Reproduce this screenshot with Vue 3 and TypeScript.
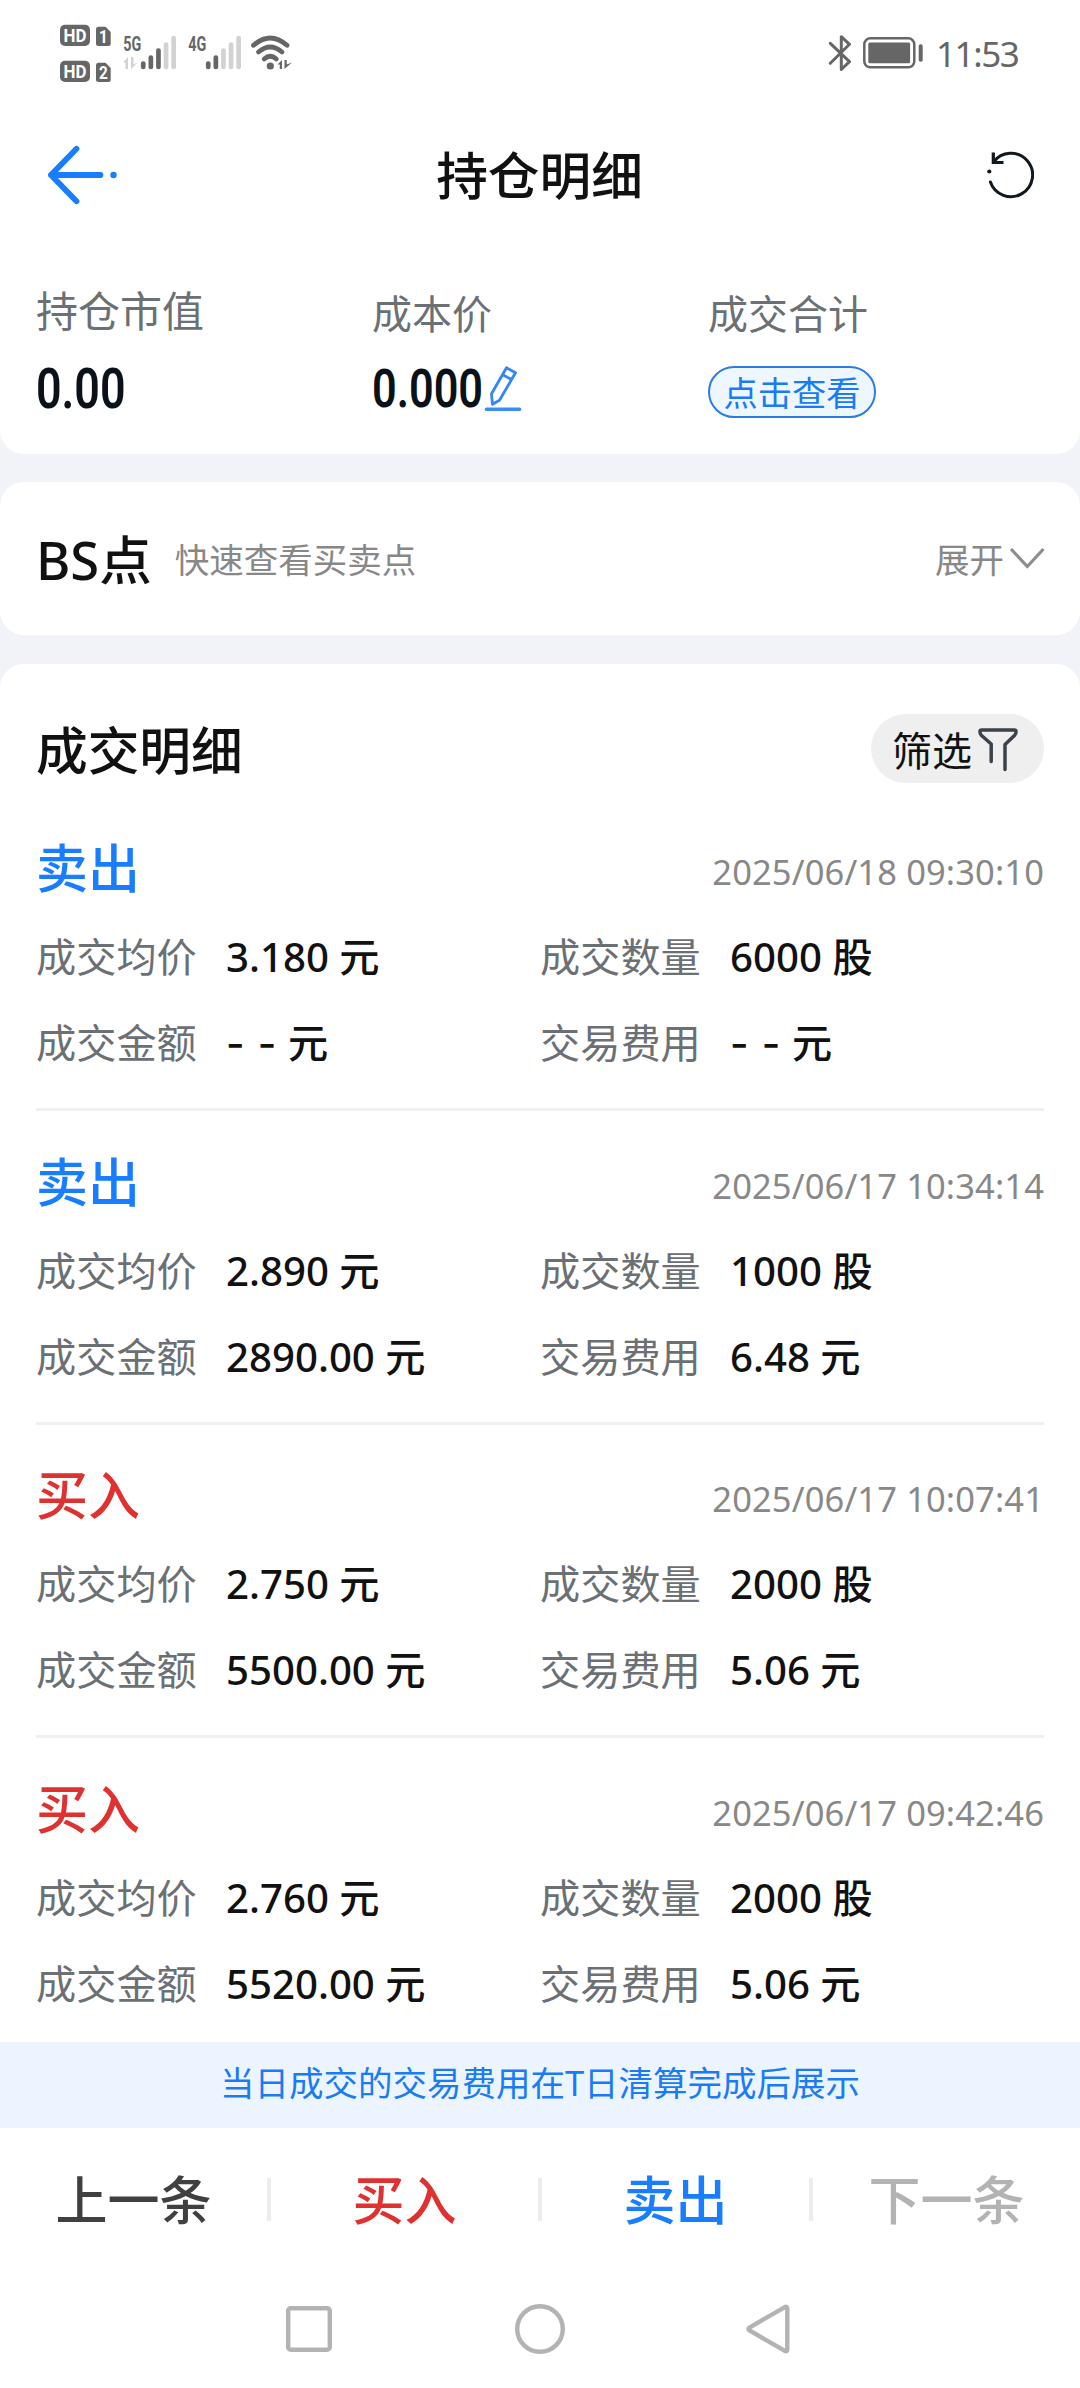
<script setup lang="ts">
interface Trade {
  side: 'buy' | 'sell'
  time: string
  price: string
  quantity: string
  amount: string
  fee: string
}

const trades: Trade[] = [
  { side: 'sell', time: '2025/06/18 09:30:10', price: '3.180', quantity: '6000', amount: '- -', fee: '- -' },
  { side: 'sell', time: '2025/06/17 10:34:14', price: '2.890', quantity: '1000', amount: '2890.00', fee: '6.48' },
  { side: 'buy', time: '2025/06/17 10:07:41', price: '2.750', quantity: '2000', amount: '5500.00', fee: '5.06' },
  { side: 'buy', time: '2025/06/17 09:42:46', price: '2.760', quantity: '2000', amount: '5520.00', fee: '5.06' },
]

const sideName = { buy: '买入', sell: '卖出' }

const cells = (t: Trade) => [
  { label: '成交均价', value: t.price, unit: '元' },
  { label: '成交数量', value: t.quantity, unit: '股' },
  { label: '成交金额', value: t.amount, unit: '元' },
  { label: '交易费用', value: t.fee, unit: '元' },
]

const barHeights = [8, 14, 21, 27, 33.5]
const signals = [
  { name: '5G', active: 3, arrows: true },
  { name: '4G', active: 2, arrows: false },
]
</script>

<template>
  <div class="page">
    <main class="content">
      <section class="card top-card">
        <div class="status">
          <div class="status-left">
            <svg class="sims" width="52" height="60" viewBox="0 0 52 60">
              <g v-for="n in 2" :key="n" :transform="`translate(0 ${(n - 1) * 36})`">
                <rect x="0" y="0.7" width="30" height="21.3" rx="5" fill="#666" />
                <text x="3.6" y="17.8" class="sim-text" font-size="18.5" textLength="23" lengthAdjust="spacingAndGlyphs">HD</text>
                <path d="M38.500 2.700H45.500L50.700 8V19.500Q50.700 22 48.200 22H38.500Q36 22 36 19.500V5.200Q36 2.700 38.500 2.700Z" fill="#666" />
                <text x="39" y="19" class="sim-text" font-size="18" textLength="8.800" lengthAdjust="spacingAndGlyphs">{{ n }}</text>
              </g>
            </svg>
            <svg v-for="s in signals" :key="s.name" class="signal" width="65" height="40" viewBox="0 0 65 40">
              <text x="11.200" y="18" class="net-text" font-size="21" textLength="18" lengthAdjust="spacingAndGlyphs">{{ s.name }}</text>
              <path v-if="s.arrows" d="M11 29.500L16 24V36H13.500V29.500ZM19 24H21.500V31.500L26 29L19 36Z" fill="#d2d2d2" />
              <rect
                v-for="(h, i) in barHeights" :key="i" :x="28.900 + i * 7.600" :y="36.300 - h" width="4.700" :height="h" rx="2.300"
                :fill="i < s.active ? '#666' : '#d2d2d2'"
              />
            </svg>
            <svg class="wifi" width="44" height="40" viewBox="0 0 44 40">
              <g fill="none" stroke="#666" stroke-width="4.800" stroke-linecap="round">
                <path d="M4.500 12.300Q21.300 -2.500 38 12.300" />
                <path d="M9.500 19Q21.300 9 33 19" />
                <path d="M15.200 26Q21.300 20.500 27.300 26" />
              </g>
              <circle cx="21.300" cy="33" r="3.600" fill="#666" />
              <path d="M28.500 31.500L33 27V36H30.800V31.500ZM35.500 27H37.700V31.500L43 29.500L35.500 36Z" fill="#666" />
            </svg>
          </div>
          <div class="status-right">
            <svg width="24" height="40" viewBox="0 0 24 40">
              <path d="M3.300 10.300L22.500 28.700L14.300 36.500V3.700L22.500 11.300L3.300 30.300" fill="none" stroke="#666" stroke-width="3" stroke-linecap="round" stroke-linejoin="round" />
            </svg>
            <svg class="battery" width="60" height="40" viewBox="0 0 60 40">
              <rect x="1.300" y="5.300" width="50" height="29" rx="6" fill="none" stroke="#666" stroke-width="2.500" />
              <rect x="5.300" y="9.500" width="41.800" height="20.700" rx="1.500" fill="#666" />
              <rect x="55.700" y="11.200" width="4" height="17.500" rx="1.800" fill="#666" />
            </svg>
            <span class="clock">11:53</span>
          </div>
        </div>

        <header class="header">
          <svg width="74" height="60" viewBox="0 0 74 60">
            <path d="M31.500 3.800L6 30L31.500 56.200M6 30H55.500" fill="none" stroke="#197dff" stroke-width="5.800" stroke-linecap="round" stroke-linejoin="round" />
            <circle cx="68.500" cy="30" r="3.200" fill="#197dff" />
          </svg>
          <h1>持仓明细</h1>
          <svg width="48" height="48" viewBox="0 0 48 48">
            <path d="M7.500 11A21.700 21.700 0 1 1 4.400 31" fill="none" stroke="#101820" stroke-width="3" stroke-linecap="round" />
            <path d="M7.300 1.500V11.500H17.500" fill="none" stroke="#101820" stroke-width="3.200" />
            <circle cx="3.300" cy="20.500" r="2.100" fill="#101820" />
          </svg>
        </header>

        <div class="summary">
          <div class="metric">
            <span class="metric-label wide">持仓市值</span>
            <div class="metric-value"><span class="num big">0.00</span></div>
          </div>
          <div class="metric">
            <span class="metric-label">成本价</span>
            <div class="metric-value">
              <span class="num">0.000</span>
              <svg class="pencil" width="38" height="48" viewBox="0 0 38 48">
                <g fill="none" stroke="#3187f5" stroke-width="2.800" stroke-linejoin="round">
                  <path d="M22.500 2.800L31.500 7.800L15.500 35.200L8.500 39.300L7.500 28.700Z" />
                  <path d="M18.800 9.800L27.600 14.600" />
                </g>
                <path d="M2.500 44.200H35.500" stroke="#3a8df6" stroke-width="3.600" stroke-linecap="round" />
              </svg>
            </div>
          </div>
          <div class="metric">
            <span class="metric-label">成交合计</span>
            <button class="view-btn">点击查看</button>
          </div>
        </div>
      </section>

      <section class="card bs-card">
        <h2>BS点</h2>
        <span class="bs-hint">快速查看买卖点</span>
        <span class="expand">展开</span>
        <svg width="36" height="24" viewBox="0 0 36 24">
          <path d="M2 2L18.300 19.500L34.500 2" fill="none" stroke="#8d8d8d" stroke-width="3.200" />
        </svg>
      </section>

      <section class="card detail-card">
        <div class="detail-head">
          <h2>成交明细</h2>
          <button class="filter">
            <span>筛选</span>
            <svg width="40" height="46" viewBox="0 0 40 46">
              <path d="M13.200 35.500V18L3.300 9.300Q2 8 2 6V5.500Q2 4 3.800 4H36.200Q38 4 38 5.500V6Q38 8 36.700 9.300L27 18.500V43.500" fill="none" stroke="#3b424a" stroke-width="3.500" stroke-linecap="round" stroke-linejoin="round" />
            </svg>
          </button>
        </div>
        <article v-for="t in trades" :key="t.time" class="trade">
          <div class="trade-head">
            <strong :class="t.side">{{ sideName[t.side] }}</strong>
            <time>{{ t.time }}</time>
          </div>
          <div class="grid">
            <div v-for="c in cells(t)" :key="c.label" class="cell">
              <span class="cell-label">{{ c.label }}</span>
              <span class="cell-value"><span :class="{ dashes: c.value === '- -' }">{{ c.value }}</span> {{ c.unit }}</span>
            </div>
          </div>
        </article>
      </section>
    </main>

    <div class="notice">当日成交的交易费用在T日清算完成后展示</div>

    <nav class="tabs">
      <a class="tab">上一条</a>
      <a class="tab buy">买入</a>
      <a class="tab sell">卖出</a>
      <a class="tab disabled">下一条</a>
    </nav>

    <footer class="system-nav">
      <svg width="54" height="54" viewBox="0 0 54 54"><rect x="6.200" y="6.200" width="41.600" height="41.600" rx="2.500" /></svg>
      <svg width="54" height="54" viewBox="0 0 54 54"><circle cx="27" cy="27" r="22.800" /></svg>
      <svg width="54" height="54" viewBox="0 0 54 54"><path d="M40.500 5.300Q43.300 3.800 43.300 6.800V47.200Q43.300 50.200 40.500 48.700L5.500 28.500Q3.300 27 5.500 25.500Z" /></svg>
    </footer>
  </div>
</template>

<style>
body {
  margin: 0;
}
</style>

<style scoped>
.page {
  width: 1080px;
  height: 2388px;
  display: flex;
  flex-direction: column;
  overflow: hidden;
  background: #fff;
  color: #111;
  font-family: "Noto Sans", "Noto Sans CJK SC", sans-serif;
}
svg {
  display: block;
  flex: none;
}
h1,
h2 {
  margin: 0;
  font-size: 51.700px;
  font-weight: 500;
  line-height: 60px;
}
button {
  box-sizing: border-box;
  border: 0;
  padding: 0;
  font-family: inherit;
}
.content {
  flex: 1;
  min-height: 0;
  overflow: hidden;
  display: flex;
  flex-direction: column;
  background: #f2f3f8;
}
.card {
  box-sizing: border-box;
  flex: none;
  background: #fff;
  border-radius: 24px;
}
.top-card {
  height: 454px;
  border-radius: 0 0 24px 24px;
}
.status {
  box-sizing: border-box;
  height: 106px;
  padding: 24px 60px 0;
  display: flex;
  justify-content: space-between;
}
.status-left,
.status-right {
  display: flex;
}
.sim-text {
  fill: #fff;
  font-family: Roboto, sans-serif;
  font-weight: 700;
}
.net-text {
  fill: #666;
  font-family: Roboto, sans-serif;
  font-weight: 700;
}
.signal {
  margin-top: 9px;
}
.wifi {
  margin: 9px 0 0 7px;
}
.status-right {
  padding-top: 9px;
}
.battery {
  margin-left: 12px;
}
.clock {
  margin: 1px 0 0 13px;
  width: 84px;
  font-size: 35px;
  line-height: 40px;
  letter-spacing: -1.400px;
  color: #666;
}
.header {
  height: 138px;
  padding: 0 46px 0 45px;
  display: flex;
  align-items: center;
  justify-content: space-between;
}
.header h1 {
  margin-left: -26px;
}
.summary {
  padding: 42px 36px 0;
  display: flex;
}
.metric {
  width: 336px;
}
.metric-label {
  display: block;
  height: 56px;
  padding-top: 3px;
  font-size: 40px;
  line-height: 50px;
  color: #6b7075;
  box-sizing: border-box;
}
.metric-label.wide {
  padding-top: 0;
  font-size: 42px;
}
.metric-value {
  display: flex;
  height: 80px;
  padding-top: 22px;
  box-sizing: border-box;
}
.num {
  display: block;
  width: 110px;
  font-family: Roboto, sans-serif;
  font-size: 53px;
  font-weight: 600;
  line-height: 50px;
  color: #0b1119;
  transform: scaleX(0.815);
  transform-origin: 0 50%;
}
.num.big {
  font-size: 55px;
}
.pencil {
  margin-left: 2px;
  margin-top: 1px;
}
.view-btn {
  display: block;
  width: 168px;
  height: 52px;
  margin-top: 24px;
  border: 2px solid #2a7de8;
  border-radius: 26px;
  background: #eef6ff;
  color: #1a7bf5;
  font-size: 34.300px;
  line-height: 47px;
}
.bs-card {
  height: 153px;
  margin: 28px 0 29px;
  padding: 1px 35px 0 36px;
  display: flex;
  align-items: center;
}
.bs-card h2 {
  padding-top: 2px;
  font-size: 52.500px;
}
.bs-hint {
  margin-left: 23px;
  padding-bottom: 3px;
  font-size: 34.500px;
  color: #888;
}
.expand {
  margin-left: auto;
  margin-right: 5px;
  padding-bottom: 3px;
  font-size: 34.500px;
  color: #888;
}
.detail-card {
  padding: 50px 36px 0;
  border-radius: 24px 24px 0 0;
}
.detail-head {
  height: 69px;
  margin-bottom: 14.500px;
  display: flex;
  align-items: center;
  justify-content: space-between;
}
.detail-head h2 {
  padding-top: 2px;
}
.filter {
  width: 173px;
  height: 69px;
  padding-left: 21px;
  border-radius: 35px;
  background: #efefef;
  color: #111;
  font-size: 40px;
  display: flex;
  align-items: center;
}
.filter svg {
  margin-left: 6px;
}
.trade {
  box-sizing: border-box;
  height: 313.500px;
  padding-top: 40.500px;
  border-bottom: 3px solid #f0f0f0;
}
.trade-head {
  height: 60px;
  display: flex;
  justify-content: space-between;
}
.trade-head strong {
  font-size: 52px;
  font-weight: 500;
  line-height: 60px;
}
time {
  margin-top: 4px;
  font-size: 34.500px;
  line-height: 60px;
  letter-spacing: 0.120px;
  color: #888;
}
.buy {
  color: #e03131;
}
.sell {
  color: #197dff;
}
.grid {
  margin-top: 29px;
  display: grid;
  grid-template-columns: 1fr 1fr;
  row-gap: 26px;
}
.cell {
  display: flex;
  font-size: 40.200px;
  line-height: 60px;
}
.cell-label {
  width: 190px;
  color: #6b7075;
}
.cell-value {
  font-weight: 500;
  white-space: pre;
}
.dashes {
  font-family: Inter, sans-serif;
  letter-spacing: 1.200px;
}
.notice {
  flex: none;
  height: 86px;
  line-height: 82px;
  text-align: center;
  background: #ecf5ff;
  color: #1a7bf5;
  font-size: 34.500px;
}
.tabs {
  flex: none;
  height: 142px;
  display: flex;
  align-items: center;
}
.tab {
  flex: 1;
  text-align: center;
  font-size: 52px;
  font-weight: 500;
  line-height: 43px;
  color: #404040;
}
.tab + .tab {
  box-sizing: border-box;
  border-left: 4px solid #ebecec;
}
.tab.buy {
  color: #e03131;
}
.tab.sell {
  color: #197dff;
}
.tab.disabled {
  color: #b3b3b3;
}
.system-nav {
  flex: none;
  height: 118px;
  display: flex;
  justify-content: center;
  align-items: center;
  gap: 177px;
}
.system-nav svg {
  fill: none;
  stroke: #b3b3b3;
  stroke-width: 4.400;
}
</style>
